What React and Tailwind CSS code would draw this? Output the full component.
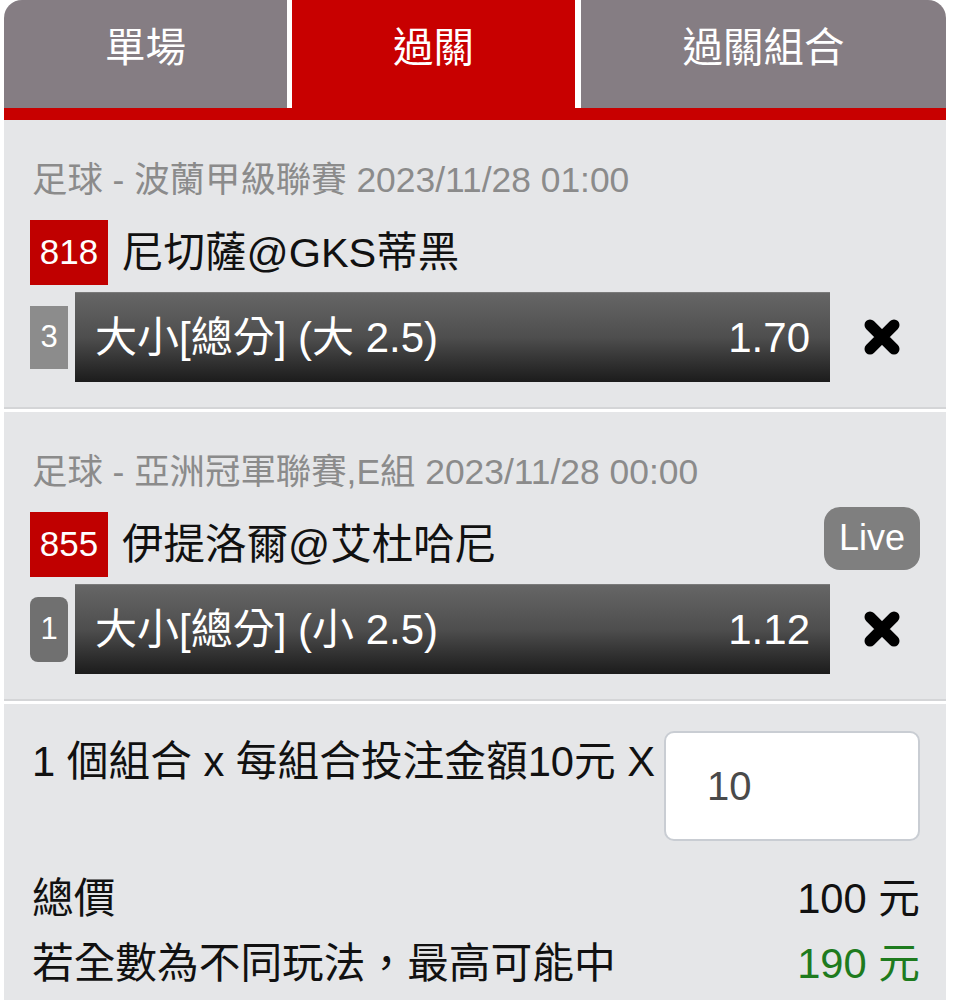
import { useState } from 'react';

const bets = [
  {
    id: 1,
    league: '足球 - 波蘭甲級聯賽 2023/11/28 01:00',
    code: '818',
    match: '尼切薩@GKS蒂黑',
    count: '3',
    pick: '大小[總分] (大 2.5)',
    odds: '1.70',
    live: false,
  },
  {
    id: 2,
    league: '足球 - 亞洲冠軍聯賽,E組 2023/11/28 00:00',
    code: '855',
    match: '伊提洛爾@艾杜哈尼',
    count: '1',
    pick: '大小[總分] (小 2.5)',
    odds: '1.12',
    live: true,
  },
];

const tabs = ['單場', '過關', '過關組合'];

const CloseIcon = () => (
  <svg width="40" height="40" viewBox="0 0 40 40" className="shrink-0">
    <path d="M8 8 L32 32 M32 8 L8 32" stroke="#000" strokeWidth="11" strokeLinecap="round" />
  </svg>
);

const BetCard = ({ bet }) => (
  <div className="mb-[3px] border-b-2 border-[#d4d5d7] bg-[#e5e6e8] pl-[26px] pr-[26px] pb-[25px] pt-[40px]">
    <div className="pl-[2px] text-[35.4px] leading-[40px] text-[#8b8b8b]">{bet.league}</div>

    <div className="mt-[20px] flex h-[65px] items-center">
      <div className="flex h-[65px] w-[78px] items-center justify-center bg-[#c00000] text-[35px] text-white">
        {bet.code}
      </div>
      <div className="ml-[14px] text-[41.5px] leading-[48px] text-[#111]">{bet.match}</div>
      {bet.live && (
        <div className="mb-[13px] ml-auto flex h-[63px] w-[96px] items-center justify-center rounded-[16px] bg-[#7f7f7f] text-[36px] text-white">
          Live
        </div>
      )}
    </div>

    <div className="mt-[7px] flex items-center">
      <div
        className={
          bet.live
            ? 'flex h-[65px] w-[38px] items-center justify-center rounded-[8px] bg-[#707070] text-[31px] text-white'
            : 'flex h-[63px] w-[38px] items-center justify-center bg-[#8c8c8c] text-[31px] text-white'
        }
      >
        {bet.count}
      </div>
      <div className="ml-[7px] flex h-[90px] w-[755px] items-center justify-between border-t border-[#7a7a7a] bg-linear-to-b from-[#666666] via-[#4e4e4e] to-[#1c1c1c] pl-[20px] pr-[20px] text-[42px] text-white">
        <span>{bet.pick}</span>
        <span>{bet.odds}</span>
      </div>
      <div className="ml-[32px]">
        <CloseIcon />
      </div>
    </div>
  </div>
);

const App = () => {
  const [activeTab, setActiveTab] = useState(1);
  const [amount, setAmount] = useState('10');

  return (
    <div className="min-h-screen bg-white font-['Liberation_Sans','Noto_Sans_CJK_TC',sans-serif]">
      <div className="ml-[4px] w-[942px]">
        <div className="flex h-[108px] gap-[5px]">
          {tabs.map((tab, index) => (
            <button
              key={tab}
              onClick={() => setActiveTab(index)}
              className={[
                'flex justify-center pt-[24px] text-[40.5px] leading-[48px] text-white',
                index === 0 ? 'w-[283px] rounded-tl-[18px]' : '',
                index === 1 ? 'w-[283px]' : '',
                index === 2 ? 'ml-[1px] flex-1 rounded-tr-[18px]' : '',
                activeTab === index ? 'bg-[#c80000]' : 'bg-[#857d83]',
              ].join(' ')}
            >
              {tab}
            </button>
          ))}
        </div>
        <div className="h-[12px] bg-[#c80000]" />

        {bets.map((bet) => (
          <BetCard key={bet.id} bet={bet} />
        ))}

        <div className="min-h-[300px] bg-[#e5e6e8] pl-[28px] pr-[26px] pt-[27px]">
          <div className="flex items-start">
            <div className="mt-[7px] text-[41.7px] leading-[48px] text-[#111]">1 個組合 x 每組合投注金額10元 X</div>
            <input
              value={amount}
              onChange={(event) => setAmount(event.target.value)}
              className="ml-auto h-[110px] w-[256px] rounded-[10px] border-2 border-[#c9cdd3] bg-white pl-[41px] text-[40px] text-[#4a4a4a] outline-none"
            />
          </div>

          <div className="mt-[34px] flex items-center justify-between text-[41.7px] leading-[48px] text-[#111]">
            <span>總價</span>
            <span>100 元</span>
          </div>
          <div className="mt-[17px] flex items-center justify-between text-[41.7px] leading-[48px] text-[#111]">
            <span>若全數為不同玩法，最高可能中</span>
            <span className="text-[#1e7b1e]">190 元</span>
          </div>
        </div>
      </div>
    </div>
  );
};

export default App;
